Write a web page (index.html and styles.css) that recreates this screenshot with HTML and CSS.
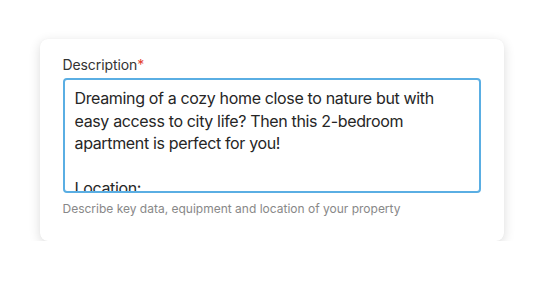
FILE: index.html
```html
<!DOCTYPE html>
<html lang="en">
<head>
<meta charset="utf-8">
<link rel="stylesheet" href="styles.css">
</head>
<body>
<div class="card">
  <label class="label" for="desc">Description<span class="req">*</span></label>
  <textarea id="desc" class="field">Dreaming of a cozy home close to nature but with easy access to city life? Then this 2-bedroom apartment is perfect for you!

Location:
Situated in a quiet neighbourhood.</textarea>
  <div class="help">Describe key data, equipment and location of your property</div>
</div>
</body>
</html>
```
FILE: styles.css
```css
html, body {
  margin: 0;
  padding: 0;
  background: #ffffff;
}
body {
  font-family: Inter, "Noto Sans", sans-serif;
  padding-top: 39px;
}
.card {
  width: 464px;
  height: 202px;
  box-sizing: border-box;
  margin: 0 auto;
  padding: 16px 23px 0 23px;
  background: #fff;
  border-radius: 8px;
  box-shadow: 0 3px 12px rgba(0,0,0,0.14), 0 0 1px rgba(0,0,0,0.06);
  display: flex;
  flex-direction: column;
}
.label {
  font-size: 14px;
  line-height: 20px;
  color: #333;
  margin-bottom: 3px;
  letter-spacing: -0.1px;
}
.req {
  color: #e2402b;
}
.field {
  display: block;
  width: 418px;
  height: 115px;
  box-sizing: border-box;
  border: 2px solid #5aaee3;
  border-radius: 4px;
  padding: 7px 10px;
  font-family: Inter, "Noto Sans", sans-serif;
  font-size: 16px;
  line-height: 22.5px;
  letter-spacing: -0.35px;
  color: #262626;
  resize: none;
  overflow: hidden;
  outline: none;
  margin: 0;
}
.help {
  margin-top: 8px;
  font-size: 12px;
  line-height: 16px;
  color: #888;
}
```
